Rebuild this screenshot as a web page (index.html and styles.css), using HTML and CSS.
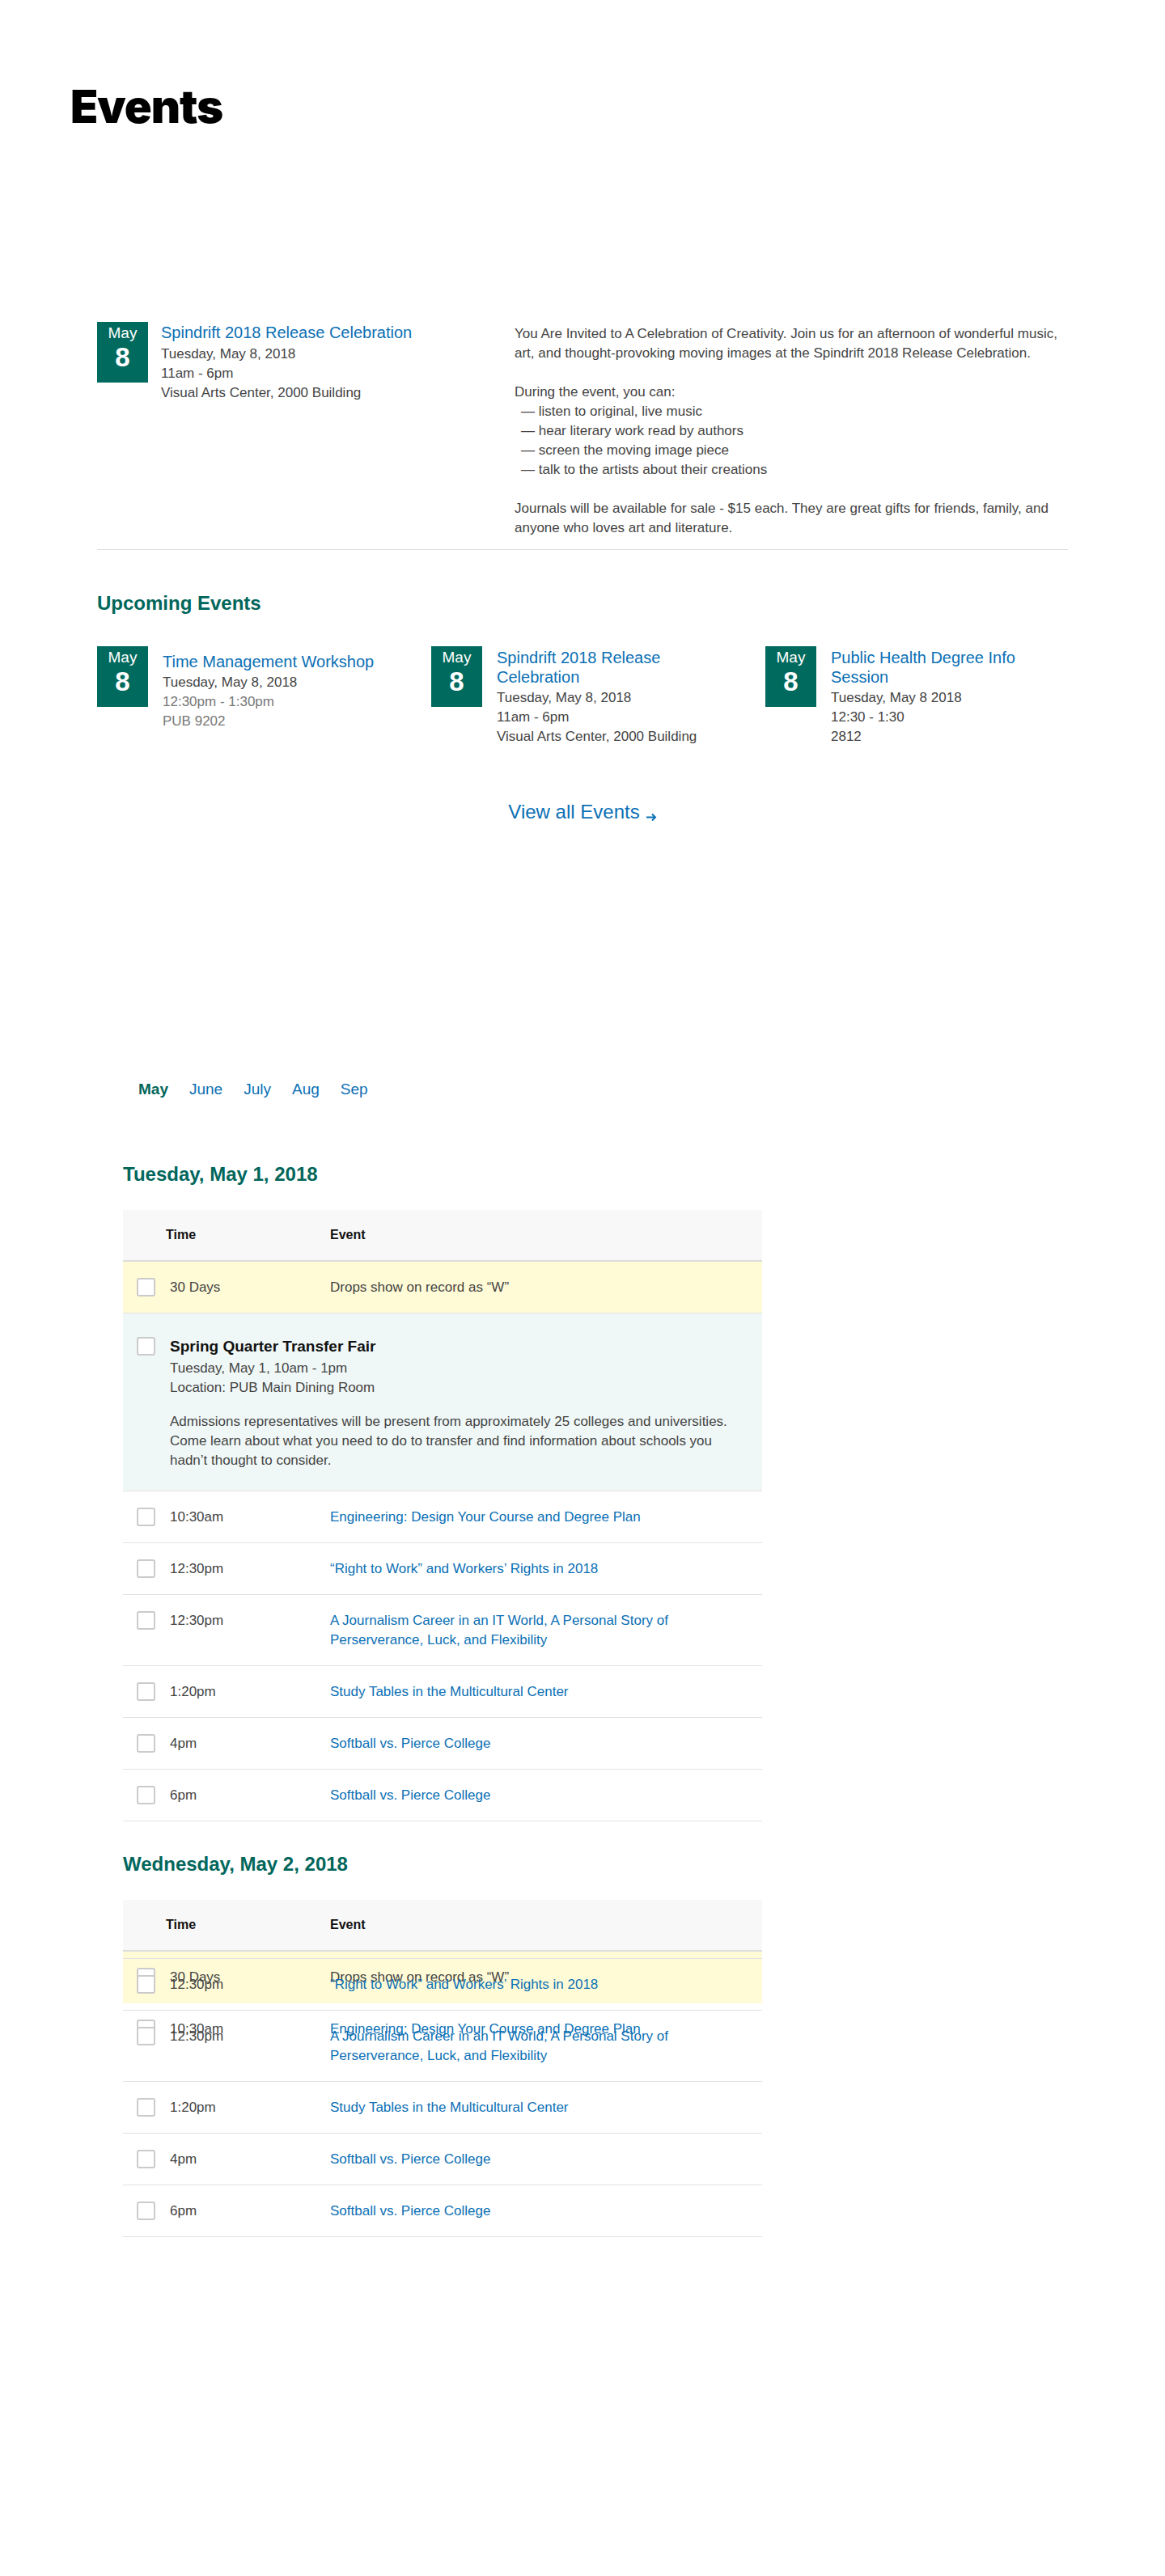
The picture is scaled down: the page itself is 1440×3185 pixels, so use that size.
FILE: index.html
```html
<!DOCTYPE html>
<html lang="en">
<head>
<meta charset="utf-8">
<title>Events</title>
<link rel="stylesheet" href="styles.css">
</head>
<body>
<header class="site-header">
  <h1 class="page-title">Events</h1>
</header>

<main class="page">
  <section class="featured">
    <div class="event-summary">
      <div class="date-badge"><span class="date-badge__month">May</span><span class="date-badge__day">8</span></div>
      <div class="event-summary__info">
        <a class="event-summary__title" href="#">Spindrift 2018 Release Celebration</a>
        <div>Tuesday, May 8, 2018</div>
        <div>11am - 6pm</div>
        <div>Visual Arts Center, 2000 Building</div>
      </div>
    </div>
    <div class="featured__desc">
      <p>You Are Invited to A Celebration of Creativity. Join us for an afternoon of wonderful music, art, and thought-provoking moving images at the Spindrift 2018 Release Celebration.</p>
      <p class="featured__lead">During the event, you can:</p>
      <ul class="dash-list">
        <li>— listen to original, live music</li>
        <li>— hear literary work read by authors</li>
        <li>— screen the moving image piece</li>
        <li>— talk to the artists about their creations</li>
      </ul>
      <p>Journals will be available for sale - $15 each. They are great gifts for friends, family, and anyone who loves art and literature.</p>
    </div>
  </section>

  <section class="upcoming">
    <h2 class="section-title">Upcoming Events</h2>
    <div class="upcoming__grid">
      <div class="card card--offset">
        <div class="date-badge"><span class="date-badge__month">May</span><span class="date-badge__day">8</span></div>
        <div class="card__info">
          <a class="card__title" href="#">Time Management Workshop</a>
          <div>Tuesday, May 8, 2018</div>
          <div class="muted">12:30pm - 1:30pm</div>
          <div class="muted">PUB 9202</div>
        </div>
      </div>
      <div class="card">
        <div class="date-badge"><span class="date-badge__month">May</span><span class="date-badge__day">8</span></div>
        <div class="card__info">
          <a class="card__title" href="#">Spindrift 2018 Release Celebration</a>
          <div>Tuesday, May 8, 2018</div>
          <div>11am - 6pm</div>
          <div>Visual Arts Center, 2000 Building</div>
        </div>
      </div>
      <div class="card">
        <div class="date-badge"><span class="date-badge__month">May</span><span class="date-badge__day">8</span></div>
        <div class="card__info">
          <a class="card__title" href="#">Public Health Degree Info Session</a>
          <div>Tuesday, May 8 2018</div>
          <div>12:30 - 1:30</div>
          <div>2812</div>
        </div>
      </div>
    </div>
    <div class="view-all"><a href="#">View all Events<svg class="view-all__arrow" width="13" height="10" viewBox="0 0 13 10"><path d="M0 5.5h11M7 1.5l4 4-4 4" stroke="currentColor" stroke-width="2" fill="none"/></svg></a></div>
  </section>
</main>

<section class="calendar">
  <nav class="months">
    <a class="months__item months__item--active" href="#">May</a>
    <a class="months__item" href="#">June</a>
    <a class="months__item" href="#">July</a>
    <a class="months__item" href="#">Aug</a>
    <a class="months__item" href="#">Sep</a>
  </nav>

  <h3 class="day-title">Tuesday, May 1, 2018</h3>
  <div class="cal-table">
    <div class="cal-head"><span></span><span>Time</span><span>Event</span></div>
    <div class="cal-body">
      <div class="cal-row cal-row--deadline"><span class="check"></span><span class="cal-time">30 Days</span><span>Drops show on record as “W”</span></div>
      <div class="cal-row cal-row--featured">
        <span class="check"></span>
        <div class="cal-feature">
          <div class="cal-feature__title">Spring Quarter Transfer Fair</div>
          <div class="cal-feature__meta">Tuesday, May 1, 10am - 1pm</div>
          <div>Location: PUB Main Dining Room</div>
          <p class="cal-feature__desc">Admissions representatives will be present from approximately 25 colleges and universities. Come learn about what you need to do to transfer and find information about schools you hadn’t thought to consider.</p>
        </div>
      </div>
      <div class="cal-row"><span class="check"></span><span class="cal-time">10:30am</span><a href="#">Engineering: Design Your Course and Degree Plan</a></div>
      <div class="cal-row"><span class="check"></span><span class="cal-time">12:30pm</span><a href="#">“Right to Work” and Workers’ Rights in 2018</a></div>
      <div class="cal-row"><span class="check"></span><span class="cal-time">12:30pm</span><a href="#">A Journalism Career in an IT World, A Personal Story of Perserverance, Luck, and Flexibility</a></div>
      <div class="cal-row"><span class="check"></span><span class="cal-time">1:20pm</span><a href="#">Study Tables in the Multicultural Center</a></div>
      <div class="cal-row"><span class="check"></span><span class="cal-time">4pm</span><a href="#">Softball vs. Pierce College</a></div>
      <div class="cal-row"><span class="check"></span><span class="cal-time">6pm</span><a href="#">Softball vs. Pierce College</a></div>
    </div>
  </div>

  <h3 class="day-title day-title--next">Wednesday, May 2, 2018</h3>
  <div class="cal-table">
    <div class="cal-head"><span></span><span>Time</span><span>Event</span></div>
    <div class="cal-body">
      <div class="cal-ghost">
        <div class="cal-row cal-row--deadline cal-row--ghost"><span class="check"></span><span class="cal-time">30 Days</span><span>Drops show on record as “W”</span></div>
        <div class="cal-row cal-row--ghost"><span class="check"></span><span class="cal-time">10:30am</span><a href="#">Engineering: Design Your Course and Degree Plan</a></div>
      </div>
      <div class="cal-gap"></div>
      <div class="cal-row"><span class="check"></span><span class="cal-time">12:30pm</span><a href="#">“Right to Work” and Workers’ Rights in 2018</a></div>
      <div class="cal-row"><span class="check"></span><span class="cal-time">12:30pm</span><a href="#">A Journalism Career in an IT World, A Personal Story of Perserverance, Luck, and Flexibility</a></div>
      <div class="cal-row"><span class="check"></span><span class="cal-time">1:20pm</span><a href="#">Study Tables in the Multicultural Center</a></div>
      <div class="cal-row"><span class="check"></span><span class="cal-time">4pm</span><a href="#">Softball vs. Pierce College</a></div>
      <div class="cal-row"><span class="check"></span><span class="cal-time">6pm</span><a href="#">Softball vs. Pierce College</a></div>
    </div>
  </div>
</section>
</body>
</html>
```

FILE: styles.css
```css
* { box-sizing: border-box; }

html, body { background: #fff; }

body {
  margin: 0;
  color: #444;
  font-family: "Liberation Sans", Arial, sans-serif;
  font-size: 17px;
  line-height: 24px;
}

a { color: #0b70b5; text-decoration: none; }

p { margin: 0; }

/* header */
.site-header { padding: 100px 0 0 87px; }

.page-title {
  margin: 0;
  font-family: Inter, "Liberation Sans", sans-serif;
  font-weight: 900;
  font-size: 56px;
  line-height: 64px;
  letter-spacing: -1px;
  color: #000;
}

.page { width: 1200px; margin: 234px auto 0; }

/* date badge */
.date-badge {
  flex: none;
  width: 63px;
  height: 75px;
  padding-top: 3px;
  background: #006a5e;
  color: #fff;
  display: flex;
  flex-direction: column;
  align-items: center;
}
.date-badge__month { font-size: 19px; line-height: 22px; }
.date-badge__day { margin-top: 2px; font-size: 33px; line-height: 34px; font-weight: bold; }

/* featured */
.featured {
  display: grid;
  grid-template-columns: 516px 696px;
  padding-bottom: 14px;
  border-bottom: 1px solid #ddd;
}
.event-summary { display: flex; gap: 16px; align-items: flex-start; }
.event-summary__info { padding-top: 1px; }
.event-summary__title { display: block; font-size: 20px; line-height: 24px; margin-bottom: 3px; }

.featured__desc { padding-top: 3px; }
.featured__desc p { margin-bottom: 24px; }
.featured__desc p:last-child { margin-bottom: 0; }
.featured__desc .featured__lead { margin-bottom: 0; }
.dash-list { list-style: none; margin: 0 0 24px; padding: 0 0 0 8px; }

/* upcoming */
.section-title {
  margin: 51px 0 39px;
  font-size: 24px;
  line-height: 29px;
  font-weight: bold;
  color: #00665b;
}
.upcoming__grid {
  display: grid;
  grid-template-columns: repeat(3, 360px);
  column-gap: 53px;
}
.card { display: flex; gap: 18px; align-items: flex-start; }
.card__info { flex: 1; padding-top: 2px; }
.card--offset .card__info { padding-top: 7px; }
.card__title { display: block; font-size: 20px; line-height: 24px; margin-bottom: 2px; }
.muted { color: #777; }

.view-all {
  margin-top: 66px;
  text-align: center;
  font-size: 24px;
  line-height: 29px;
}
.view-all__arrow { margin-left: 8px; vertical-align: -3px; }

/* calendar */
.calendar { width: 790px; margin: 317px 0 0 152px; }

.months { display: flex; gap: 26px; padding-left: 19px; font-size: 19px; line-height: 24px; }
.months__item--active { font-weight: bold; color: #00665b; }

.day-title {
  margin: 78px 0 30px;
  font-size: 24px;
  line-height: 29px;
  font-weight: bold;
  color: #00665b;
}
.day-title--next { margin-top: 38px; }

.cal-head {
  display: grid;
  grid-template-columns: 53px 203px 1fr;
  padding: 19px 0;
  background: #f8f8f8;
  border-bottom: 2px solid #ddd;
  font-size: 16px;
  font-weight: bold;
  color: #111;
}

.cal-body { position: relative; z-index: 0; }

.cal-row {
  display: grid;
  grid-template-columns: 58px 198px 1fr;
  align-items: start;
  padding: 20px 20px 19px 0;
  border-bottom: 1px solid #e2e2e2;
}
.cal-row--deadline { background: #fffbd6; }
.cal-row--featured { background: #f0f8f7; padding: 29px 20px 25px 0; }

.check {
  width: 23px;
  height: 23px;
  margin-left: 17px;
  border: 2px solid #cbcbcb;
  border-radius: 3px;
  background: #fff;
}

.cal-feature { grid-column: 2 / 4; }
.cal-feature__title { font-size: 19px; font-weight: bold; color: #111; }
.cal-feature__meta { margin-top: 3px; }
.cal-feature__desc { margin-top: 18px; }

.cal-ghost { position: absolute; top: 0; left: 0; right: 0; z-index: -1; }
.cal-row--ghost { border-bottom: 0; padding-bottom: 20px; }

.cal-gap { height: 9px; border-bottom: 1px solid #e2e2e2; }
```
